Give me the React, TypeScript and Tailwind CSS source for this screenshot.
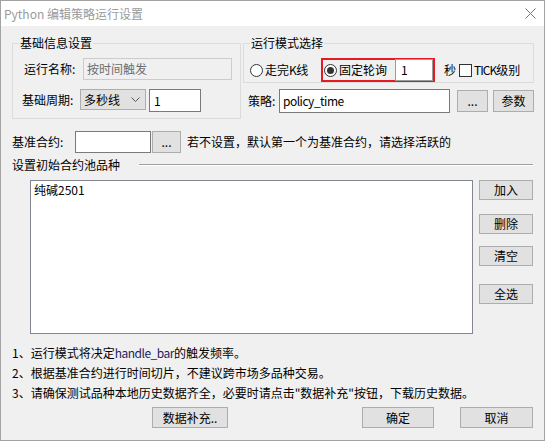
const Btn = ({ children, className = "" }: { children: React.ReactNode; className?: string }) => (
    <button className={`flex items-center justify-center bg-[#e1e1e1] border border-[#adadad] leading-[16px] ${className}`}>
        {children}
    </button>
);

const Radio = ({ checked = false }: { checked?: boolean }) => (
    <div className="w-[13px] h-[13px] rounded-full border border-[#333] bg-white flex items-center justify-center shrink-0">
        {checked && <div className="w-[7px] h-[7px] rounded-full bg-[#333]" />}
    </div>
);

const Group = ({ title, className = "", children }: { title: string; className?: string; children: React.ReactNode }) => (
    <div className={`border border-[#dcdcdc] ${className}`}>
        <div className="-mt-[9px] ml-[6px] px-[1px] w-fit bg-[#f0f0f0] leading-[16px]">{title}</div>
        {children}
    </div>
);

export default function App() {
    return (
        <div className="w-[545px] h-[441px] border border-[#a3a3a3] bg-[#f0f0f0] text-[12px] leading-[16px] text-black font-['Noto_Sans_CJK_SC',sans-serif] flex flex-col overflow-hidden">
            {/* title bar */}
            <div className="h-[25px] bg-white flex items-center justify-between shrink-0">
                <span className="ml-[3px] text-[#9a9a9a]">Python 编辑策略运行设置</span>
                <svg width="11" height="11" viewBox="0 0 11 11" className="mr-[8px]">
                    <path d="M0.5 0.5 L10.5 10.5 M10.5 0.5 L0.5 10.5" stroke="#777" strokeWidth="1" />
                </svg>
            </div>

            {/* top groups */}
            <div className="flex pt-[17px] pl-[11px]">
                <Group title="基础信息设置" className="w-[229px] h-[76px]">
                    <div className="flex items-center mt-[7px] ml-[11px]">
                        <span className="w-[59px]">运行名称:</span>
                        <div className="w-[149px] h-[22px] border border-[#cccccc] flex items-center pl-[3px] text-[#6d6d6d]">
                            按时间触发
                        </div>
                    </div>
                    <div className="flex items-start mt-[9px] ml-[9px]">
                        <span className="w-[58px] h-[21px] flex items-center">基础周期:</span>
                        <div className="w-[66px] h-[21px] bg-[#e1e1e1] border border-[#adadad] flex items-center justify-between pl-[3px] pr-[5px]">
                            <span>多秒线</span>
                            <svg width="9" height="5" viewBox="0 0 9 5">
                                <path d="M0.5 0.5 L4.5 4.5 L8.5 0.5" stroke="#555" strokeWidth="1" fill="none" />
                            </svg>
                        </div>
                        <div className="ml-[3px] w-[52px] h-[23px] border border-[#7a7a7a] bg-white flex items-center pl-[4px]">1</div>
                    </div>
                </Group>

                <div className="ml-[2px] flex flex-col">
                    <Group title="运行模式选择" className="w-[291px] h-[40px]">
                        <div className="flex items-center mt-[7px] ml-[6px] h-[24px]">
                            <div className="w-[71px] flex items-center gap-[2px]">
                                <Radio />
                                <span>走完<span className="tracking-[-0.5px]">K</span>线</span>
                            </div>
                            <div className="w-[114px] h-[24px] border-2 border-[#e41b23] flex items-center">
                                <div className="ml-[1px]"><Radio checked /></div>
                                <span className="ml-[2px]">固定轮询</span>
                                <div className="ml-auto w-[38px] h-[22px] border border-[#9a9a9a] bg-white flex items-center pl-[5px]">1</div>
                            </div>
                            <span className="ml-[9px]">秒</span>
                            <div className="ml-[3px] w-[13px] h-[13px] border border-[#333] bg-white" />
                            <span className="ml-[2px]"><span className="tracking-[-1px]">TICK</span>级别</span>
                        </div>
                    </Group>
                    <div className="flex items-center mt-[6px]">
                        <span className="ml-[5px] w-[31px]">策略:</span>
                        <div className="w-[171px] h-[24px] border border-[#7a7a7a] bg-white flex items-center pl-[3px] tracking-[-0.5px]">policy_time</div>
                        <Btn className="ml-[7px] w-[31px] h-[22px]">...</Btn>
                        <Btn className="ml-[5px] w-[41px] h-[22px]">参数</Btn>
                    </div>
                </div>
            </div>

            {/* base contract */}
            <div className="flex items-center mt-[12px] ml-[11px]">
                <span className="w-[63px]">基准合约:</span>
                <div className="w-[76px] h-[22px] border border-[#7a7a7a] bg-white" />
                <Btn className="ml-[1px] w-[29px] h-[22px]">...</Btn>
                <span className="ml-[6px]">若不设置，默认第一个为基准合约，请选择活跃的</span>
            </div>

            {/* pool title */}
            <div className="flex items-center mt-[4px] ml-[11px]">
                <span className="w-[127px]">设置初始合约池品种</span>
                <div className="w-[394px] h-[2px] border-t border-[#a0a0a0] border-b border-b-white" />
            </div>

            {/* list */}
            <div className="flex items-start mt-[7px] ml-[29px]">
                <div className="w-[443px] h-[154px] border border-[#828790] bg-white pl-[3px] pt-[1px]">纯碱2501</div>
                <div className="ml-[6px] flex flex-col">
                    <Btn className="w-[54px] h-[20px]">加入</Btn>
                    <Btn className="mt-[14px] w-[54px] h-[20px]">删除</Btn>
                    <Btn className="mt-[12px] w-[54px] h-[20px]">清空</Btn>
                    <Btn className="mt-[18px] w-[54px] h-[20px]">全选</Btn>
                </div>
            </div>

            {/* notes */}
            <div className="mt-[9px] ml-[11px] flex flex-col leading-[20px]">
                <span>1、运行模式将决定<span className="text-[#1c2260] tracking-[-0.5px]">handle_bar</span>的触发频率。</span>
                <span>2、根据基准合约进行时间切片，不建议跨市场多品种交易。</span>
                <span>3、请确保测试品种本地历史数据齐全，必要时请点击"数据补充"按钮，下载历史数据。</span>
            </div>

            {/* bottom buttons */}
            <div className="flex items-center mt-[4px] ml-[151px]">
                <Btn className="w-[76px] h-[21px]">数据补充..</Btn>
                <Btn className="ml-[134px] w-[72px] h-[21px]">确定</Btn>
                <Btn className="ml-[26px] w-[73px] h-[21px]">取消</Btn>
            </div>
        </div>
    );
}
